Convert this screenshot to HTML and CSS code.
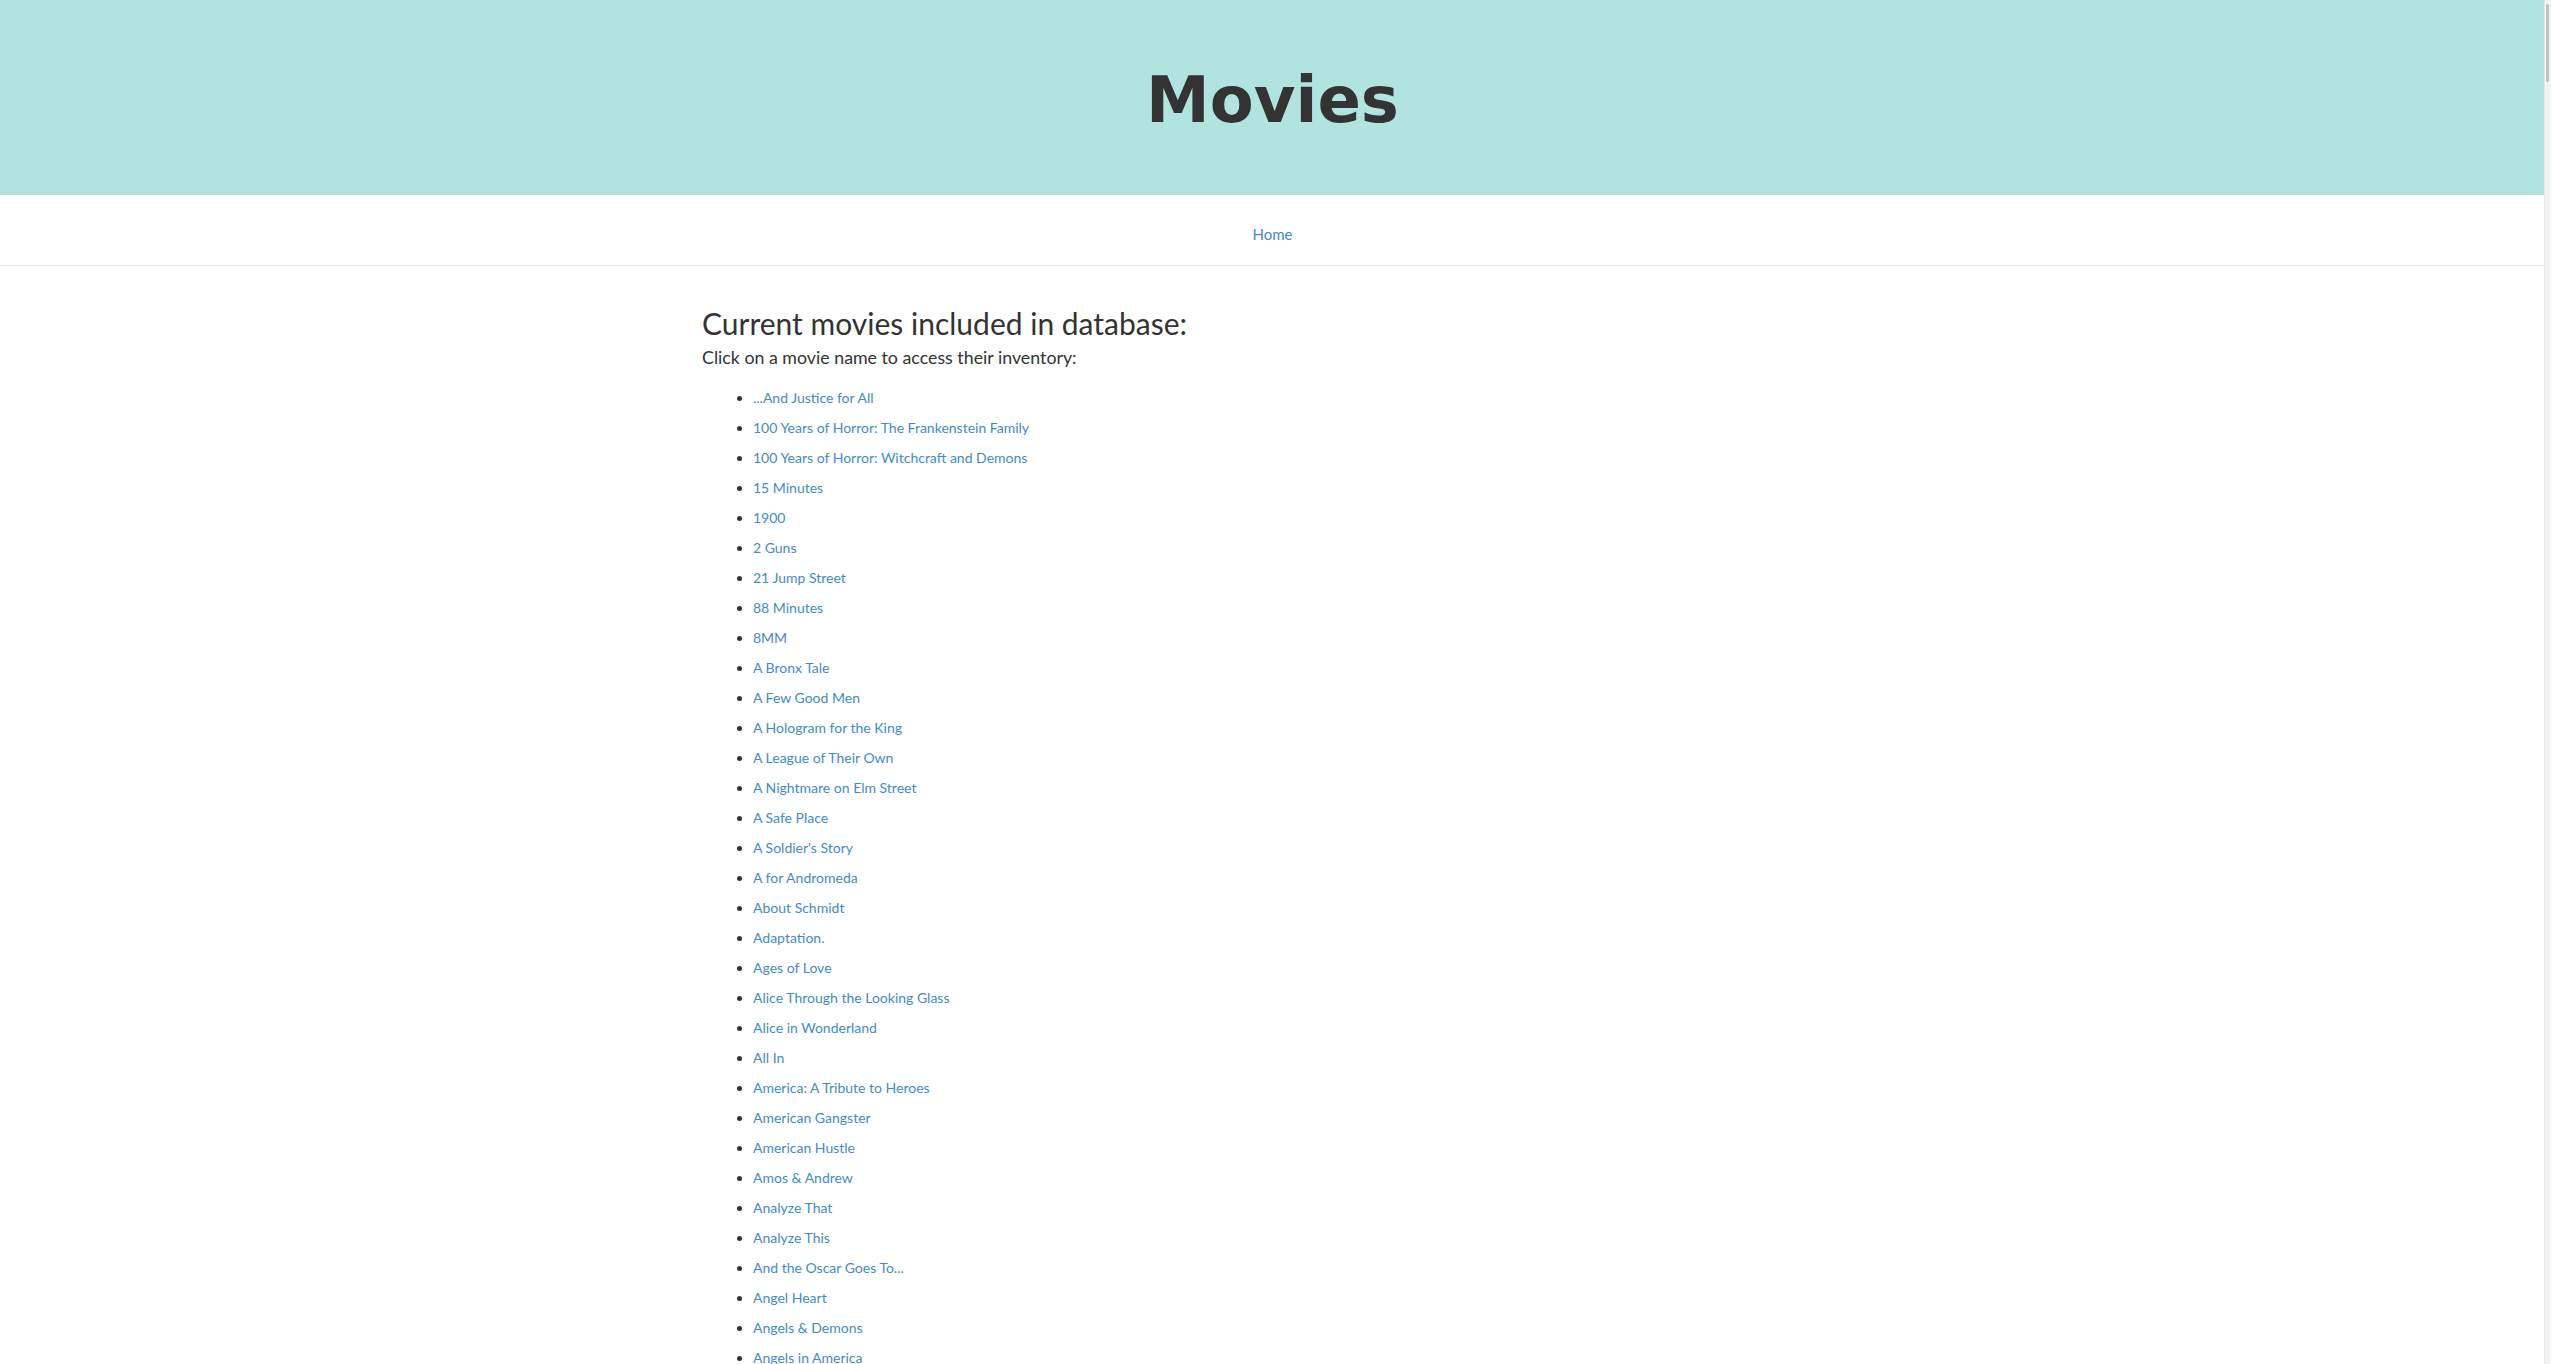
FILE: index.html
```html
<!DOCTYPE html>
<html lang="en">
<head>
<meta charset="utf-8">
<title>Movies</title>
<link rel="stylesheet" href="styles.css">
</head>
<body>
<header class="banner">
  <h1 class="banner-title">Movies</h1>
</header>
<nav class="topnav">
  <a href="#" class="nav-link">Home</a>
</nav>
<main class="content">
  <h2 class="heading">Current movies included in database:</h2>
  <p class="sub">Click on a movie name to access their inventory:</p>
  <ul class="movie-list">
    <li><a href="#">...And Justice for All</a></li>
    <li><a href="#">100 Years of Horror: The Frankenstein Family</a></li>
    <li><a href="#">100 Years of Horror: Witchcraft and Demons</a></li>
    <li><a href="#">15 Minutes</a></li>
    <li><a href="#">1900</a></li>
    <li><a href="#">2 Guns</a></li>
    <li><a href="#">21 Jump Street</a></li>
    <li><a href="#">88 Minutes</a></li>
    <li><a href="#">8MM</a></li>
    <li><a href="#">A Bronx Tale</a></li>
    <li><a href="#">A Few Good Men</a></li>
    <li><a href="#">A Hologram for the King</a></li>
    <li><a href="#">A League of Their Own</a></li>
    <li><a href="#">A Nightmare on Elm Street</a></li>
    <li><a href="#">A Safe Place</a></li>
    <li><a href="#">A Soldier's Story</a></li>
    <li><a href="#">A for Andromeda</a></li>
    <li><a href="#">About Schmidt</a></li>
    <li><a href="#">Adaptation.</a></li>
    <li><a href="#">Ages of Love</a></li>
    <li><a href="#">Alice Through the Looking Glass</a></li>
    <li><a href="#">Alice in Wonderland</a></li>
    <li><a href="#">All In</a></li>
    <li><a href="#">America: A Tribute to Heroes</a></li>
    <li><a href="#">American Gangster</a></li>
    <li><a href="#">American Hustle</a></li>
    <li><a href="#">Amos &amp; Andrew</a></li>
    <li><a href="#">Analyze That</a></li>
    <li><a href="#">Analyze This</a></li>
    <li><a href="#">And the Oscar Goes To...</a></li>
    <li><a href="#">Angel Heart</a></li>
    <li><a href="#">Angels &amp; Demons</a></li>
    <li><a href="#">Angels in America</a></li>
    <li><a href="#">Angie</a></li>
    <li><a href="#">Another Day in Paradise</a></li>
    <li><a href="#">Any Given Sunday</a></li>
  </ul>
</main>
<div class="scroll-gutter"><div class="scroll-thumb"></div></div>
</body>
</html>
```
FILE: styles.css
```css
html {
  overflow: hidden;
}
body {
  margin: 0;
  width: 2545px;
  font-family: Lato, "Liberation Sans", sans-serif;
  color: #333333;
  background: #ffffff;
}
.banner {
  height: 195px;
  background: #b2e4df;
  display: flex;
  justify-content: center;
}
.banner-title {
  margin: 0;
  padding-top: 60px;
  font-family: "DejaVu Sans", Verdana, sans-serif;
  font-weight: bold;
  font-size: 64px;
  line-height: 80px;
  color: #333333;
  height: 80px;
}
.topnav {
  height: 70px;
  border-bottom: 1px solid #e6e6e6;
  display: flex;
  justify-content: center;
  align-items: center;
}
.nav-link {
  font-size: 15px;
  color: #428bca;
  text-decoration: none;
  margin-top: 8px;
}
.content {
  padding-left: 702px;
  padding-top: 39px;
}
.heading {
  margin: 0;
  font-weight: normal;
  font-size: 30px;
  line-height: 36px;
}
.sub {
  margin: 4px 0 0;
  font-size: 17.8px;
  line-height: 24px;
}
.movie-list {
  margin: 14px 0 0;
  padding-left: 51px;
  list-style: disc;
}
.movie-list li {
  font-size: 14px;
  line-height: 30px;
}
.movie-list a {
  color: #428bca;
  text-decoration: none;
}
.scroll-gutter {
  position: fixed;
  top: 0;
  right: 0;
  width: 6px;
  height: 100%;
  background: #f4f4f4;
  border-left: 1px solid #e8e8e8;
}
.scroll-thumb {
  position: absolute;
  top: 4px;
  left: 1px;
  width: 3px;
  height: 78px;
  border-radius: 2px;
  background: #c2c2c2;
}
```
